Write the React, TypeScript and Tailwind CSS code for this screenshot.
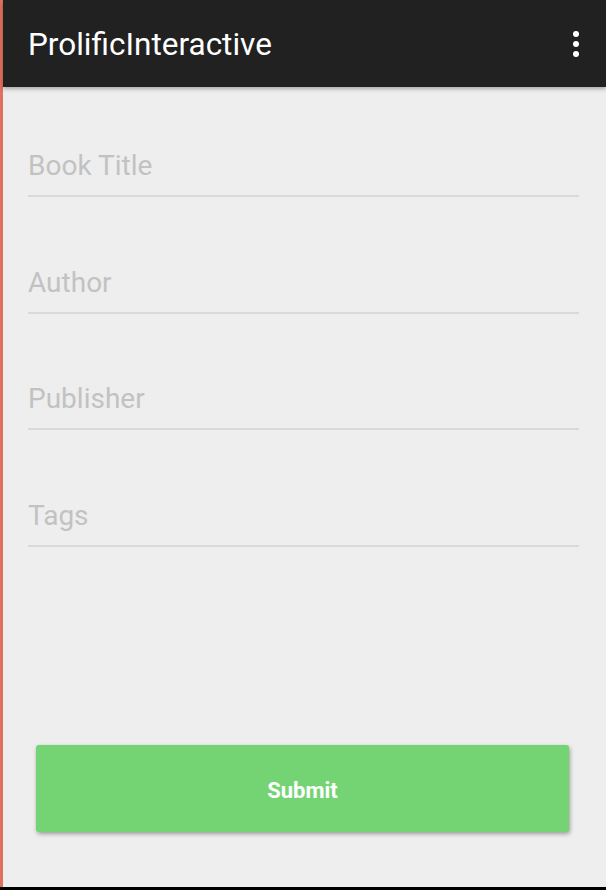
import React from "react";

const fields = ["Book Title", "Author", "Publisher", "Tags"];

export default function App() {
  return (
    <div
      className="w-[606px] h-[890px] flex flex-col bg-black overflow-hidden"
      style={{ fontFamily: "Roboto, 'Noto Sans', sans-serif" }}
    >
      <div className="flex flex-1 min-h-0">
        <div className="w-[3px] bg-[#e0705f]" />
        <div className="flex-1 flex flex-col bg-[#eeeeee] relative">
          <header className="h-[87px] bg-[#212121] flex items-center justify-between pl-[25px] pr-[27px] shadow-[0_2px_4px_rgba(0,0,0,0.3)] relative z-10">
            <span className="text-white text-[31.5px] leading-none pt-[3px]">ProlificInteractive</span>
            <div className="flex flex-col gap-[4px] items-center">
              <span className="w-[6px] h-[6px] rounded-full bg-white" />
              <span className="w-[6px] h-[6px] rounded-full bg-white" />
              <span className="w-[6px] h-[6px] rounded-full bg-white" />
            </div>
          </header>
          <main className="flex-1 flex flex-col pl-[25px] pr-[27px] pt-[62px]">
            <div className="flex flex-col gap-[68.5px]">
              {fields.map((f) => (
                <div key={f} className="flex flex-col">
                  <div className="h-[32px] flex items-center pt-[2px] text-[28px] text-[#c2c2c2] leading-none">
                    {f}
                  </div>
                  <div className="h-[14px]" />
                  <div className="h-[2px] bg-[#d9d9d9]" />
                </div>
              ))}
            </div>
            <div className="flex-1" />
            <button className="ml-[8px] mr-[10px] mb-[55px] h-[87px] pt-[4px] bg-[#74d474] rounded-[3px] shadow-[1px_2px_4px_rgba(0,0,0,0.35)] text-white font-bold text-[22px]">
              Submit
            </button>
          </main>
        </div>
      </div>
      <div className="h-[3px] bg-black" />
    </div>
  );
}
